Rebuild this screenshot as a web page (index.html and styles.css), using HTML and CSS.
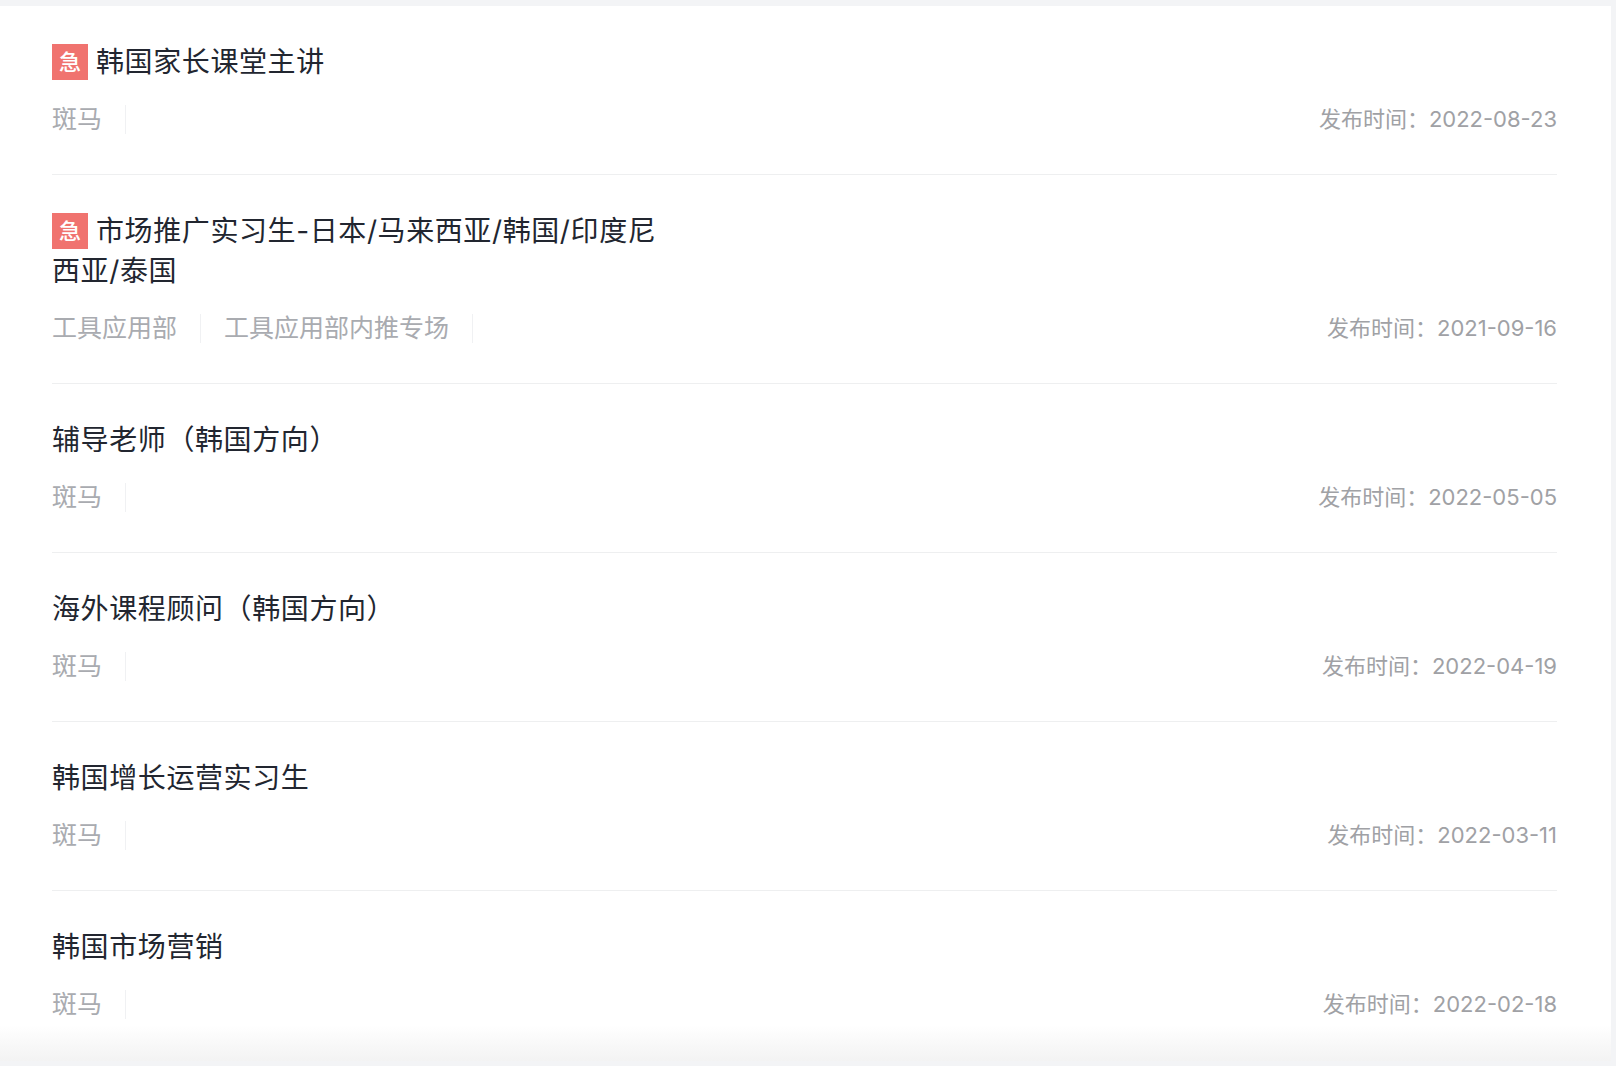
FILE: index.html
```html
<!DOCTYPE html>
<html lang="zh-CN">
<head>
<meta charset="utf-8">
<title>职位列表</title>
<link rel="stylesheet" href="styles.css">
</head>
<body>
<main class="card">
  <ul class="list">
    <li class="item">
      <h3 class="title"><span class="urgent">急</span>韩国家长课堂主讲</h3>
      <div class="meta"><div class="tags"><span class="tag">斑马</span></div><span class="date">发布时间：2022-08-23</span></div>
    </li>
    <li class="item">
      <h3 class="title title-narrow"><span class="urgent">急</span>市场推广实习生-日本/马来西亚/韩国/印度尼西亚/泰国</h3>
      <div class="meta"><div class="tags"><span class="tag">工具应用部</span><span class="tag">工具应用部内推专场</span></div><span class="date">发布时间：2021-09-16</span></div>
    </li>
    <li class="item">
      <h3 class="title">辅导老师（韩国方向）</h3>
      <div class="meta"><div class="tags"><span class="tag">斑马</span></div><span class="date">发布时间：2022-05-05</span></div>
    </li>
    <li class="item">
      <h3 class="title">海外课程顾问（韩国方向）</h3>
      <div class="meta"><div class="tags"><span class="tag">斑马</span></div><span class="date">发布时间：2022-04-19</span></div>
    </li>
    <li class="item">
      <h3 class="title">韩国增长运营实习生</h3>
      <div class="meta"><div class="tags"><span class="tag">斑马</span></div><span class="date">发布时间：2022-03-11</span></div>
    </li>
    <li class="item">
      <h3 class="title">韩国市场营销</h3>
      <div class="meta"><div class="tags"><span class="tag">斑马</span></div><span class="date">发布时间：2022-02-18</span></div>
    </li>
  </ul>
  <div class="fade"></div>
</main>
</body>
</html>
```

FILE: styles.css
```css
* { box-sizing: border-box; }
html, body { margin: 0; height: 100%; }
body {
  background: #f3f4f6;
  padding: 6px 5px 5px 0;
  font-family: Inter, "Noto Sans CJK SC", sans-serif;
  overflow: hidden;
}
.card {
  position: relative;
  height: 100%;
  background: #fff;
  padding: 0 54px 0 52px;
  overflow: hidden;
}
.list { list-style: none; margin: 0; padding: 0; }
.item {
  padding: 36px 0 40px;
  border-bottom: 1px solid #eeeff0;
}
.item:last-child { border-bottom: 0; }
.title {
  margin: 0;
  font-size: 28px;
  font-weight: 400;
  line-height: 40px;
  color: #222630;
  letter-spacing: 0.6px;
}
.title-narrow { max-width: 610px; }
.urgent {
  display: inline-block;
  width: 36px;
  height: 36px;
  margin-right: 8px;
  background: #f0736f;
  color: #fff;
  font-size: 22px;
  font-weight: 500;
  line-height: 36px;
  letter-spacing: 0;
  text-align: center;
  vertical-align: top;
  margin-top: 2px;
}
.meta {
  display: flex;
  align-items: center;
  justify-content: space-between;
  margin-top: 22px;
  height: 30px;
}
.tags { display: flex; }
.tag {
  height: 29px;
  padding-right: 23px;
  margin-right: 23px;
  border-right: 1px solid #f0f1f3;
  font-size: 25px;
  line-height: 29px;
  color: #a9abb0;
}
.date {
  font-size: 22px;
  line-height: 30px;
  color: #a0a1a5;
}
.fade {
  position: absolute;
  left: 0;
  right: 0;
  bottom: 0;
  height: 36px;
  background: linear-gradient(rgba(240, 240, 240, 0), rgba(240, 240, 240, 0.8));
  pointer-events: none;
}
```
